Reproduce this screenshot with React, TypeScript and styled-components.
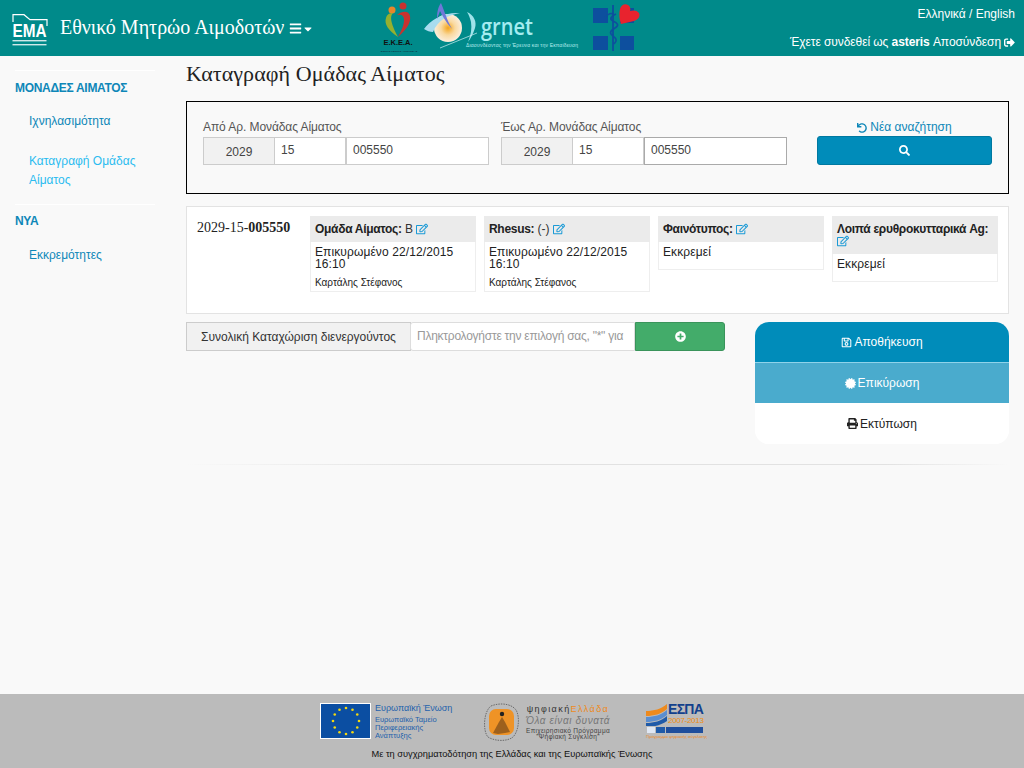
import styled, { createGlobalStyle } from "styled-components";
import {
  FaBars,
  FaCaretDown,
  FaCertificate,
  FaPlusCircle,
  FaPrint,
  FaRegEdit,
  FaRegSave,
  FaSearch,
  FaSignOutAlt,
  FaUndo,
} from "react-icons/fa";

const GlobalStyle = createGlobalStyle`
  html, body {
    margin: 0;
    padding: 0;
    background: #f9f9f9;
    font-family: "Liberation Sans", Arial, sans-serif;
    font-size: 12px;
    color: #222;
  }
  * {
    box-sizing: border-box;
  }
`;

const Page = styled.div`
  display: flex;
  flex-direction: column;
  min-height: 100vh;
`;

const Header = styled.header`
  display: flex;
  height: 56px;
  background: #008a8a;
  color: #fff;
`;

const Brand = styled.div`
  display: flex;
  align-items: center;
  gap: 12px;
  width: 382px;
  padding-left: 12px;
`;

const EmaMark = styled.svg`
  align-self: flex-start;
  margin-top: 14px;
`;

const BrandTitle = styled.div`
  display: flex;
  align-items: center;
  font-family: "Liberation Serif", serif;
  font-size: 20px;
  margin-top: -2px;
`;

const MenuIcons = styled.span`
  display: inline-flex;
  align-items: center;
  margin: 3px 0 0 5px;
  svg {
    font-size: 13px;
  }
  svg + svg {
    font-size: 12px;
  }
`;

const Partners = styled.div`
  display: flex;
  align-items: flex-start;
  padding-top: 2px;
`;

const PartnerMark = styled.svg<{ $left: number }>`
  margin-left: ${(p) => p.$left}px;
`;

const UserArea = styled.div`
  margin-left: auto;
  display: flex;
  flex-direction: column;
  align-items: flex-end;
  padding: 7px 9px 0 0;
  line-height: 14px;
`;

const UserLine = styled.div`
  display: flex;
  align-items: center;
  gap: 3px;
  margin-top: 14px;
  letter-spacing: -0.08px;
  svg {
    font-size: 11px;
  }
`;

const Body = styled.div`
  display: flex;
  flex: 1;
`;

const Sidebar = styled.nav`
  width: 186px;
  flex: none;
  padding: 14px 31px 0 15px;
`;

const SideRule = styled.div<{ $top?: number }>`
  height: 1px;
  background: #fff;
  margin-top: ${(p) => p.$top ?? 0}px;
`;

const SideHeading = styled.div<{ $tight?: boolean }>`
  font-weight: 700;
  color: #0e87b8;
  line-height: 20px;
  letter-spacing: -0.3px;
  padding: ${(p) => (p.$tight ? "6px 0 4px" : "7px 0 3px")};
`;

const SideLink = styled.div<{ $active?: boolean }>`
  color: ${(p) => (p.$active ? "#2bbcf0" : "#0e87b8")};
  line-height: 19px;
  padding: 11px 0 10px 14px;
`;

const Main = styled.main`
  flex: 1;
  padding: 5px 15px 0 0;
  min-width: 0;
`;

const PageTitle = styled.h1`
  margin: 0 0 14px;
  font-family: "Liberation Serif", serif;
  font-size: 22px;
  font-weight: 400;
  line-height: 26px;
  letter-spacing: 0.08px;
  color: #222;
`;

const SearchBox = styled.section`
  display: flex;
  height: 93px;
  border: 1px solid #000;
  padding: 17px 16px 0;
  gap: 12px;
`;

const RangeField = styled.div`
  width: 286px;
`;

const FieldLabel = styled.div`
  color: #555;
  line-height: 16px;
  height: 18px;
  letter-spacing: -0.08px;
`;

const InputRow = styled.div`
  display: flex;
  height: 28px;
`;

const CodeCell = styled.div<{ $width?: number; $grey?: boolean; $center?: boolean; $focus?: boolean }>`
  ${(p) => (p.$width ? `width: ${p.$width}px; flex: none;` : "flex: 1;")}
  border: 1px solid ${(p) => (p.$focus ? "#aaa" : "#ccc")};
  margin-left: -1px;
  &:first-child,
  &:last-child {
    margin-left: 0;
  }
  background: ${(p) => (p.$grey ? "#f1f1f1" : "#fff")};
  color: #444;
  line-height: ${(p) => (p.$center ? 29 : 25)}px;
  padding: 0 6px;
  text-align: ${(p) => (p.$center ? "center" : "left")};
`;

const SearchActions = styled.div`
  width: 175px;
  margin-left: 18px;
  text-align: center;
`;

const ResetLink = styled.div`
  display: flex;
  align-items: center;
  justify-content: center;
  gap: 3px;
  color: #0e87b8;
  line-height: 17px;
  svg {
    font-size: 10px;
  }
`;

const SearchButton = styled.div`
  display: flex;
  align-items: center;
  justify-content: center;
  height: 29px;
  background: #008cba;
  border: 1px solid #0079a1;
  border-radius: 3px;
  color: #fff;
  svg {
    font-size: 11px;
  }
`;

const ResultCard = styled.section`
  display: flex;
  align-items: flex-start;
  gap: 8px;
  margin-top: 12px;
  background: #fff;
  border: 1px solid #e3e3e3;
  padding: 9px 10px 21px;
`;

const UnitCode = styled.div`
  width: 105px;
  font-family: "Liberation Serif", serif;
  font-size: 14px;
  line-height: 16px;
  padding-top: 4px;
  color: #222;
`;

const TestCell = styled.div`
  width: 166px;
  flex: none;
`;

const TestHead = styled.div`
  background: #ebebeb;
  padding: 7px 5px;
  line-height: 12px;
  color: #333;
  b {
    color: #222;
    letter-spacing: -0.3px;
  }
  svg {
    color: #1a9ad6;
    font-size: 12px;
    vertical-align: -2px;
  }
`;

const TestBody = styled.div<{ $signed?: boolean }>`
  background: #fff;
  border: 1px solid #eee;
  border-top: 0;
  padding: 4px 4px ${(p) => (p.$signed ? 1 : 11)}px;
  line-height: 12px;
  letter-spacing: 0.1px;
  color: #222;
`;

const Signer = styled.div`
  font-size: 10px;
  line-height: 14px;
  letter-spacing: 0;
  margin-top: 6px;
`;

const LowerRow = styled.div`
  display: flex;
  align-items: flex-start;
  margin-top: 8px;
`;

const EntryGroup = styled.div`
  display: flex;
  width: 539px;
  height: 29px;
`;

const EntryAddon = styled.div`
  width: 225px;
  background: #f1f1f1;
  border: 1px solid #ccc;
  color: #333;
  line-height: 28px;
  text-align: center;
`;

const EntryInput = styled.div`
  width: 225px;
  margin-left: -1px;
  background: #fff;
  border: 1px solid #ddd;
  border-radius: 3px 0 0 3px;
  color: #999;
  line-height: 27px;
  padding-left: 6px;
  letter-spacing: -0.25px;
  white-space: nowrap;
`;

const AddButton = styled.div`
  flex: 1;
  display: flex;
  align-items: center;
  justify-content: center;
  background: #43ac6a;
  border: 1px solid #3a945b;
  border-radius: 0 3px 3px 0;
  color: #fff;
  svg {
    font-size: 11px;
  }
`;

const ActionList = styled.div`
  width: 254px;
  margin-left: 30px;
  border-radius: 14px;
  overflow: hidden;
  background: #fff;
`;

const ActionItem = styled.div<{ $tone: "primary" | "info" | "plain" }>`
  display: flex;
  align-items: center;
  justify-content: center;
  gap: 2px;
  height: ${(p) => (p.$tone === "info" ? 40 : 41)}px;
  background: ${(p) => ({ primary: "#008cba", info: "#4aabcd", plain: "#fff" })[p.$tone]};
  border-bottom: ${(p) => (p.$tone === "primary" ? "1px solid #8fd3ea" : "0")};
  color: ${(p) => (p.$tone === "plain" ? "#222" : "#fff")};
  svg {
    font-size: 11px;
  }
`;

const FadeRule = styled.div`
  height: 1px;
  margin-top: 20px;
  background: linear-gradient(to right, #f9f9f9, #e2e2e2 30%, #e2e2e2 85%, #f9f9f9);
`;

const Footer = styled.footer`
  height: 74px;
  background: #bbb;
  padding-top: 9px;
  display: flex;
  flex-direction: column;
  align-items: center;
`;

const FooterLogos = styled.div`
  display: flex;
  align-items: flex-start;
  height: 38px;
`;

const EuLogo = styled.div`
  display: flex;
  gap: 4px;
  width: 164px;
  color: #1f62ac;
`;

const EuText = styled.div`
  font-size: 7.5px;
  line-height: 8px;
  white-space: nowrap;
  b {
    display: block;
    font-weight: 400;
    font-size: 9px;
    line-height: 11px;
    margin-bottom: 2px;
  }
`;

const DigitalLogo = styled.div`
  display: flex;
  gap: 4px;
  width: 162px;
`;

const DigitalText = styled.div`
  width: 90px;
  text-align: center;
  font-size: 6.5px;
  line-height: 6px;
  letter-spacing: 0.3px;
  color: #444;
  white-space: nowrap;
`;

const DigitalName = styled.div`
  font-size: 9px;
  line-height: 12px;
  letter-spacing: 1.4px;
  color: #333;
  span {
    color: #ee8a1d;
  }
`;

const DigitalMotto = styled.div`
  font-size: 10px;
  line-height: 11px;
  font-style: italic;
  letter-spacing: 0.6px;
  color: #777;
  margin-bottom: 2px;
`;

const EspaBlock = styled.div`
  display: flex;
  flex-direction: column;
  width: 58px;
`;

const EspaTop = styled.div`
  display: flex;
  gap: 1px;
  height: 23px;
`;

const EspaWords = styled.div`
  display: flex;
  flex-direction: column;
  white-space: nowrap;
`;

const EspaName = styled.div`
  font-size: 14px;
  line-height: 13px;
  font-weight: 700;
  letter-spacing: -0.7px;
  color: #12408c;
`;

const EspaYears = styled.div`
  font-size: 8px;
  line-height: 10px;
  letter-spacing: -0.3px;
  color: #f08c12;
`;

const EspaSlogan = styled.div`
  font-size: 4.2px;
  line-height: 7px;
  color: #ee8a1d;
  white-space: nowrap;
`;

const FooterNote = styled.div`
  margin-top: 7px;
  font-size: 9.25px;
  line-height: 12px;
  color: #111;
`;

const EmaLogo = () => (
  <EmaMark width="36" height="33" viewBox="0 0 36 33">
    <path d="M1 8V.7h11l6 5h17V12" fill="none" stroke="#fff" strokeWidth="1.2" />
    <text
      transform="translate(0.5 23) scale(1.05 1.3)"
      fontFamily="Liberation Sans"
      fontWeight="700"
      fontSize="14.6"
      fill="#fff"
    >
      EMA
    </text>
    <rect x="0.5" y="26" width="34" height="1.4" fill="#cfe9e9" />
    <rect x="0.5" y="30" width="34" height="1.4" fill="#cfe9e9" />
  </EmaMark>
);

const EkeaLogo = () => (
  <PartnerMark $left={-4} width="42" height="52" viewBox="0 0 42 52">
    <circle cx="14" cy="8" r="3.5" fill="#e8862a" />
    <circle cx="25" cy="4" r="3.5" fill="#c8322f" />
    <path d="M20 35C10 28 6 22 8 16c1-4 4-5 7-5-3 3-3 9 5 24z" fill="#95b02f" />
    <path d="M20 35c10-9 13-15 12-21-1-5-7-6-13-1 5-1 7 1 7 5 0 6-3 11-6 17z" fill="#c8322f" />
    <text x="20" y="43" textAnchor="middle" fontFamily="Liberation Sans" fontWeight="700" fontSize="7.5" fill="#111">
      Ε.Κ.Ε.Α.
    </text>
    <text x="21" y="50" textAnchor="middle" fontFamily="Liberation Sans" fontSize="2.5" fill="#123">
      ΕΘΝΙΚΟ ΚΕΝΤΡΟ ΑΙΜΟΔΟΣΙΑΣ
    </text>
  </PartnerMark>
);

const GrnetLogo = () => (
  <PartnerMark $left={4} width="160" height="52" viewBox="0 0 160 52">
    <defs>
      <radialGradient id="sun" cx="50%" cy="50%" r="50%">
        <stop offset="0" stopColor="#f4a51c" />
        <stop offset="0.5" stopColor="#f9d9a0" />
        <stop offset="1" stopColor="#fbeedd" />
      </radialGradient>
    </defs>
    <circle cx="24" cy="26" r="14" fill="url(#sun)" />
    <path d="M0 27C6 18 20 10 36 11 24 13 14 18 9 30 6 30 3 29 0 27z" fill="#a9dcef" />
    <path d="M13 17c0-7 1-12 4-16 3 7 6 17 11 26-7-8-10-14-12-18-1 3-2 5-3 8z" fill="#6f78d8" />
    <path d="M43 10c7 3 10 10 8 16-2 6-4 10-7 14 3-7 4-14 3-20-1-4-2-7-4-10z" fill="#9fe3ea" />
    <path d="M16 46L53 31" stroke="#cdeff3" strokeWidth="0.7" />
    <text
      x="57"
      y="33"
      fontFamily="Open Sans"
      fontWeight="600"
      fontSize="24"
      fill="#a4ecf0"
      textLength="52"
      lengthAdjust="spacingAndGlyphs"
    >
      grnet
    </text>
    <text x="42" y="45" fontFamily="Liberation Sans" fontSize="5" fill="#b8eef0" textLength="112">
      Διασυνδέοντας την Έρευνα και την Εκπαίδευση
    </text>
  </PartnerMark>
);

const MinistryLogo = () => (
  <PartnerMark $left={9} width="48" height="50" viewBox="0 0 48 50">
    <rect x="0" y="6" width="15" height="15" fill="#0d4f9e" />
    <rect x="27" y="6" width="14" height="15" fill="#0d4f9e" />
    <rect x="0" y="34" width="15" height="14" fill="#0d4f9e" />
    <rect x="27" y="34" width="14" height="14" fill="#0d4f9e" />
    <path d="M28 22c-2-5-2-11-1-15 1-4 5-6 8-4 2 1 3 4 2 6 3-1 7-1 9 2 2 4-2 7-5 8z" fill="#e8232e" />
    <path d="M20 3v46" stroke="#0d4f9e" strokeWidth="1.8" />
    <path d="M23 12c-5 2-7 5-3 7s7 4 2 7-6 5-2 8 4 5 1 8" fill="none" stroke="#0d4f9e" strokeWidth="1.6" />
    <path d="M12 16c3-4 6-5 8-4" fill="none" stroke="#0d4f9e" strokeWidth="1.4" />
  </PartnerMark>
);

const EuFlag = () => {
  const stars = Array.from({ length: 12 }, (_, i) => {
    const a = (i * Math.PI) / 6;
    return { x: 26 + 13 * Math.sin(a), y: 18 - 13 * Math.cos(a) };
  });
  return (
    <svg width="51" height="36" viewBox="0 0 51 36">
      <rect x="0.5" y="0.5" width="50" height="35" fill="#0b4ea2" stroke="#fff" />
      {stars.map((s) => (
        <circle key={`${s.x}-${s.y}`} cx={s.x} cy={s.y} r="1.3" fill="#f4d80f" />
      ))}
    </svg>
  );
};

const DigitalMark = () => (
  <svg width="35" height="38" viewBox="0 0 35 38">
    <path d="M7 3C17-1 30 1 33 9c3 8 1 20-4 25-6 5-19 4-25 0C-1 29-1 9 7 3z" fill="none" stroke="#555" strokeWidth="0.8" strokeDasharray="1.5 1" />
    <rect x="5" y="6" width="25" height="26" rx="7" fill="#ef9326" />
    <circle cx="18" cy="11" r="2.2" fill="#222" />
    <path d="M18 14l-3 5-6 11 5 1 7-1 5-1-5-10z" fill="#7a4a1a" opacity="0.7" />
  </svg>
);

const EspaLogo = () => (
  <EspaBlock>
    <EspaTop>
      <svg width="21" height="23" viewBox="0 0 21 23">
        <path d="M0 8c8 0 15-2 21-7v5C15 11 8 13 0 13z" fill="#ee8a1d" />
        <path d="M0 14c8 0 15-2 21-7v5c-6 5-13 7-21 7z" fill="#5b8ed0" />
        <path d="M0 20c8 0 15-2 21-7v5c-6 4-13 6-21 6z" fill="#1f5aa8" />
      </svg>
      <EspaWords>
        <EspaName>ΕΣΠΑ</EspaName>
        <EspaYears>2007-2013</EspaYears>
      </EspaWords>
    </EspaTop>
    <svg width="58" height="7" viewBox="0 0 58 7">
      <rect x="1" y="1" width="8" height="6" fill="#dfe7f3" />
      <rect x="10" y="1" width="9" height="6" fill="#1f5aa8" />
      <rect x="20" y="1" width="37" height="6" fill="#1f4e9c" />
    </svg>
    <EspaSlogan>Πρόγραμμα ψηφιακής σύγκλισης</EspaSlogan>
  </EspaBlock>
);

const CodeRange = ({ label, focus }: { label: string; focus?: boolean }) => (
  <RangeField>
    <FieldLabel>{label}</FieldLabel>
    <InputRow>
      <CodeCell $width={72} $grey $center>2029</CodeCell>
      <CodeCell $width={72}>15</CodeCell>
      <CodeCell $focus={focus}>005550</CodeCell>
    </InputRow>
  </RangeField>
);

const tests = [
  { name: "Ομάδα Αίματος:", value: " B ", status: "Επικυρωμένο 22/12/2015 16:10", signer: "Καρτάλης Στέφανος" },
  { name: "Rhesus:", value: " (-) ", status: "Επικυρωμένο 22/12/2015 16:10", signer: "Καρτάλης Στέφανος" },
  { name: "Φαινότυπος:", value: " ", status: "Εκκρεμεί" },
  { name: "Λοιπά ερυθροκυτταρικά Ag:", value: " ", status: "Εκκρεμεί" },
];

export default function App() {
  return (
    <Page>
      <GlobalStyle />
      <Header>
        <Brand>
          <EmaLogo />
          <BrandTitle>
            Εθνικό Μητρώο Αιμοδοτών
            <MenuIcons>
              <FaBars />
              <FaCaretDown />
            </MenuIcons>
          </BrandTitle>
        </Brand>
        <Partners>
          <EkeaLogo />
          <GrnetLogo />
          <MinistryLogo />
        </Partners>
        <UserArea>
          <div>Ελληνικά / English</div>
          <UserLine>
            <span>
              Έχετε συνδεθεί ως <b>asteris</b> Αποσύνδεση
            </span>
            <FaSignOutAlt />
          </UserLine>
        </UserArea>
      </Header>
      <Body>
        <Sidebar>
          <SideRule />
          <SideHeading>ΜΟΝΑΔΕΣ ΑΙΜΑΤΟΣ</SideHeading>
          <SideLink>Ιχνηλασιμότητα</SideLink>
          <SideLink $active>Καταγραφή Ομάδας Αίματος</SideLink>
          <SideRule $top={4} />
          <SideHeading $tight>ΝΥΑ</SideHeading>
          <SideLink>Εκκρεμότητες</SideLink>
        </Sidebar>
        <Main>
          <PageTitle>Καταγραφή Ομάδας Αίματος</PageTitle>
          <SearchBox>
            <CodeRange label="Από Αρ. Μονάδας Αίματος" />
            <CodeRange label="Έως Αρ. Μονάδας Αίματος" focus />
            <SearchActions>
              <ResetLink>
                <FaUndo /> Νέα αναζήτηση
              </ResetLink>
              <SearchButton>
                <FaSearch />
              </SearchButton>
            </SearchActions>
          </SearchBox>
          <ResultCard>
            <UnitCode>
              2029-15-<b>005550</b>
            </UnitCode>
            {tests.map((t) => (
              <TestCell key={t.name}>
                <TestHead>
                  <b>{t.name}</b>
                  {t.value}
                  <FaRegEdit />
                </TestHead>
                <TestBody $signed={!!t.signer}>
                  {t.status}
                  {t.signer && <Signer>{t.signer}</Signer>}
                </TestBody>
              </TestCell>
            ))}
          </ResultCard>
          <LowerRow>
            <EntryGroup>
              <EntryAddon>Συνολική Καταχώριση διενεργούντος</EntryAddon>
              <EntryInput>Πληκτρολογήστε την επιλογή σας, "*" για</EntryInput>
              <AddButton>
                <FaPlusCircle />
              </AddButton>
            </EntryGroup>
            <ActionList>
              <ActionItem $tone="primary">
                <FaRegSave /> Αποθήκευση
              </ActionItem>
              <ActionItem $tone="info">
                <FaCertificate /> Επικύρωση
              </ActionItem>
              <ActionItem $tone="plain">
                <FaPrint /> Εκτύπωση
              </ActionItem>
            </ActionList>
          </LowerRow>
          <FadeRule />
        </Main>
      </Body>
      <Footer>
        <FooterLogos>
          <EuLogo>
            <EuFlag />
            <EuText>
              <b>Ευρωπαϊκή Ένωση</b>
              Ευρωπαϊκό Ταμείο
              <br />
              Περιφερειακής
              <br />
              Ανάπτυξης
            </EuText>
          </EuLogo>
          <DigitalLogo>
            <DigitalMark />
            <DigitalText>
              <DigitalName>
                ψηφιακή<span>Ελλάδα</span>
              </DigitalName>
              <DigitalMotto>Όλα είναι δυνατά</DigitalMotto>
              Επιχειρησιακό Πρόγραμμα
              <br />
              "Ψηφιακή Σύγκλιση"
            </DigitalText>
          </DigitalLogo>
          <EspaLogo />
        </FooterLogos>
        <FooterNote>Με τη συγχρηματοδότηση της Ελλάδας και της Ευρωπαϊκής Ένωσης</FooterNote>
      </Footer>
    </Page>
  );
}
